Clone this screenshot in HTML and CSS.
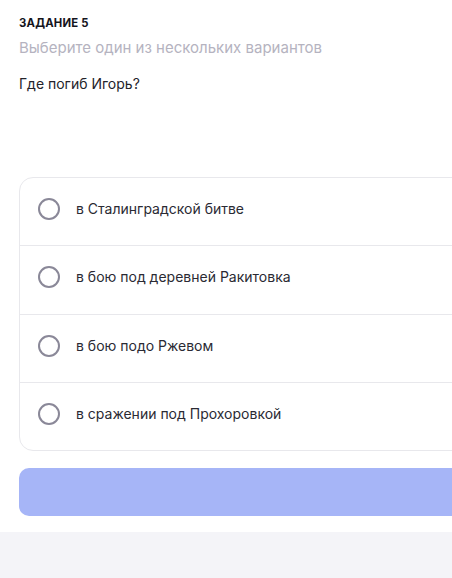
FILE: index.html
```html
<!DOCTYPE html>
<html lang="ru">
<head>
    <meta charset="UTF-8">
    <meta name="viewport" content="width=device-width, initial-scale=1.0">
    <title>Задание 5</title>
    <link rel="stylesheet" href="styles.css">
</head>
<body>
    <div class="task">
        <div class="task-label">ЗАДАНИЕ 5</div>
        <div class="task-hint">Выберите один из нескольких вариантов</div>
        <div class="task-question">Где погиб Игорь?</div>

        <!-- Answer options -->
        <div class="options">
            <label class="option">
                <span class="radio"></span>
                <span class="option-text">в Сталинградской битве</span>
            </label>
            <label class="option">
                <span class="radio"></span>
                <span class="option-text">в бою под деревней Ракитовка</span>
            </label>
            <label class="option">
                <span class="radio"></span>
                <span class="option-text">в бою подо Ржевом</span>
            </label>
            <label class="option">
                <span class="radio"></span>
                <span class="option-text">в сражении под Прохоровкой</span>
            </label>
        </div>

        <button class="submit" disabled></button>
    </div>
    <div class="footer"></div>
</body>
</html>
```
FILE: styles.css
```css
html, body {
    margin: 0;
    padding: 0;
    overflow: hidden;
}
body {
    font-family: Inter, "Noto Sans", sans-serif;
    background-color: #ffffff;
    color: #23232b;
    width: 452px;
    height: 578px;
}
.task {
    width: 480px;
    padding: 16px 0 16px 19px;
    box-sizing: border-box;
    background: #ffffff;
}
.task-label {
    font-size: 11.3px;
    font-weight: 700;
    line-height: 14px;
    letter-spacing: 0.2px;
    color: #15151c;
}
.task-hint {
    margin-top: 9px;
    font-size: 15px;
    line-height: 18px;
    color: #b5b3c0;
}
.task-question {
    margin-top: 18px;
    font-size: 14px;
    line-height: 18px;
    color: #23232b;
}
.options {
    margin-top: 84px;
    border: 1px solid #e8e8ec;
    border-radius: 14px;
    background: #ffffff;
}
.option {
    display: flex;
    align-items: center;
    gap: 16px;
    height: 67.25px;
    padding-left: 18px;
    border-bottom: 1px solid #e8e8ec;
    cursor: pointer;
}
.option:last-child {
    border-bottom: none;
}
.radio {
    width: 18px;
    height: 18px;
    border: 2px solid #8a8898;
    border-radius: 50%;
    flex-shrink: 0;
    margin-top: -5px;
}
.option-text {
    font-size: 14px;
    line-height: 18px;
    color: #2a2a33;
    margin-top: -5px;
}
.submit {
    display: block;
    width: 100%;
    height: 48px;
    margin-top: 17px;
    border: none;
    border-radius: 10px;
    background-color: #a6b5f7;
}
.footer {
    height: 100px;
    background-color: #f4f4f8;
}
```
